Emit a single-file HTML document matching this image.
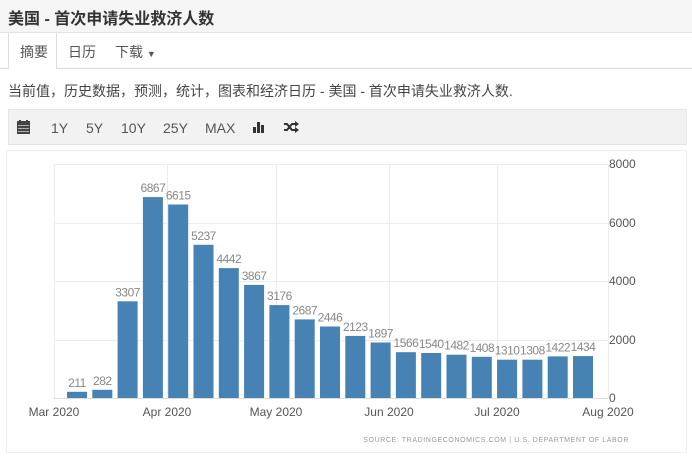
<!DOCTYPE html>
<html><head><meta charset="utf-8"><style>
body{margin:0;width:692px;height:461px;background:#fff;font-family:"Liberation Sans","Noto Sans CJK SC",sans-serif;position:relative;overflow:hidden;color:#333}
.a{position:absolute;white-space:nowrap}
</style></head><body>
<div class="a" style="left:0;top:0;width:692px;height:32px;background:#f5f5f5;border-bottom:1px solid #e3e3e3"></div>
<div class="a" style="left:8px;top:5px;font-size:16px;font-weight:bold;color:#333">美国 - 首次申请失业救济人数</div>
<div class="a" style="left:0;top:68px;width:692px;height:1px;background:#ddd"></div>
<div class="a" style="left:8px;top:33px;width:47px;height:36px;background:#fff;border:1px solid #ddd;border-bottom:none;border-top:none"></div>
<div class="a" style="left:20px;top:42px;font-size:14px;color:#555">摘要</div>
<div class="a" style="left:68px;top:42px;font-size:14px;color:#555">日历</div>
<div class="a" style="left:115px;top:42px;font-size:14px;color:#555">下载 <span style="font-size:9px">▼</span></div>
<div class="a" style="left:8px;top:81px;font-size:14px;color:#444">当前值，历史数据，预测，统计，图表和经济日历 - 美国 - 首次申请失业救济人数.</div>
<div class="a" style="left:8px;top:109px;width:679px;height:36px;background:#f2f2f2;border:1px solid #e6e6e6;box-sizing:border-box"></div>
<svg class="a" style="left:17px;top:120px" width="13" height="14" viewBox="0 0 13 14"><rect x="0" y="1" width="13" height="13" fill="#444"/><rect x="2" y="0" width="2" height="3" fill="#444"/><rect x="9" y="0" width="2" height="3" fill="#444"/><g fill="#ccc"><rect x="1" y="5" width="11" height="0.8"/><rect x="1" y="8" width="11" height="0.8"/><rect x="1" y="11" width="11" height="0.8"/></g></svg>
<div class="a" style="left:51px;top:120px;font-size:14px;color:#555">1Y</div>
<div class="a" style="left:86px;top:120px;font-size:14px;color:#555">5Y</div>
<div class="a" style="left:121px;top:120px;font-size:14px;color:#555">10Y</div>
<div class="a" style="left:163px;top:120px;font-size:14px;color:#555">25Y</div>
<div class="a" style="left:205px;top:120px;font-size:14px;color:#555">MAX</div>
<svg class="a" style="left:253px;top:120px" width="13" height="13"><rect x="0" y="7" width="3" height="6" fill="#333"/><rect x="4" y="2" width="3" height="11" fill="#333"/><rect x="8" y="5" width="3" height="8" fill="#333"/></svg>
<svg class="a" style="left:284px;top:121px" width="15" height="12" viewBox="0 0 15 12"><path d="M0 3h3l5 6h4M0 9h3l5-6h4" stroke="#333" stroke-width="2" fill="none"/><path d="M11 0l4 3-4 3zM11 6l4 3-4 3z" fill="#333"/></svg>
<div class="a" style="left:6px;top:150px;width:681px;height:303px;border:1px solid #eee;box-sizing:border-box"></div>
<svg class="a" style="left:0;top:0" width="692" height="461" font-family="Liberation Sans,sans-serif">
<g stroke="#ececec" stroke-width="1">
<line x1="54" y1="164.5" x2="608" y2="164.5"/><line x1="54" y1="223.5" x2="608" y2="223.5"/><line x1="54" y1="281.5" x2="608" y2="281.5"/><line x1="54" y1="340.5" x2="608" y2="340.5"/>
<line x1="54.5" y1="164" x2="54.5" y2="398"/><line x1="167.5" y1="164" x2="167.5" y2="398"/><line x1="276.5" y1="164" x2="276.5" y2="398"/><line x1="389.5" y1="164" x2="389.5" y2="398"/><line x1="497.5" y1="164" x2="497.5" y2="398"/><line x1="608.5" y1="164" x2="608.5" y2="398"/>
</g>
<line x1="54" y1="398.5" x2="608" y2="398.5" stroke="#ddd"/>
<g id="bars" fill="#4682b4"></g>
<g id="lbl" fill="#888" font-size="12" text-anchor="middle" letter-spacing="-0.5"></g>
<g fill="#555" font-size="12">
<text x="609" y="168">8000</text><text x="609" y="227">6000</text><text x="609" y="285">4000</text><text x="609" y="344">2000</text><text x="609" y="402">0</text>
</g>
<g fill="#555" font-size="12" text-anchor="middle">
<text x="54" y="416">Mar 2020</text><text x="167" y="416">Apr 2020</text><text x="276" y="416">May 2020</text><text x="389" y="416">Jun 2020</text><text x="497" y="416">Jul 2020</text><text x="608" y="416">Aug 2020</text>
</g>
<text x="629" y="442" fill="#999" font-size="7" text-anchor="end" letter-spacing="0.6">SOURCE: TRADINGECONOMICS.COM | U.S. DEPARTMENT OF LABOR</text>
</svg>
<script>
var v=[211,282,3307,6867,6615,5237,4442,3867,3176,2687,2446,2123,1897,1566,1540,1482,1408,1310,1308,1422,1434];
var b='',l='';
for(var i=0;i<v.length;i++){var x=67+i*25.3,h=v[i]/8000*234,y=398-h;
b+='<rect x="'+x.toFixed(1)+'" y="'+y.toFixed(1)+'" width="20" height="'+h.toFixed(1)+'"/>';
l+='<text x="'+(x+10).toFixed(1)+'" y="'+(y-5).toFixed(1)+'">'+v[i]+'</text>';}
document.getElementById('bars').innerHTML=b;document.getElementById('lbl').innerHTML=l;
</script>
</body></html>
